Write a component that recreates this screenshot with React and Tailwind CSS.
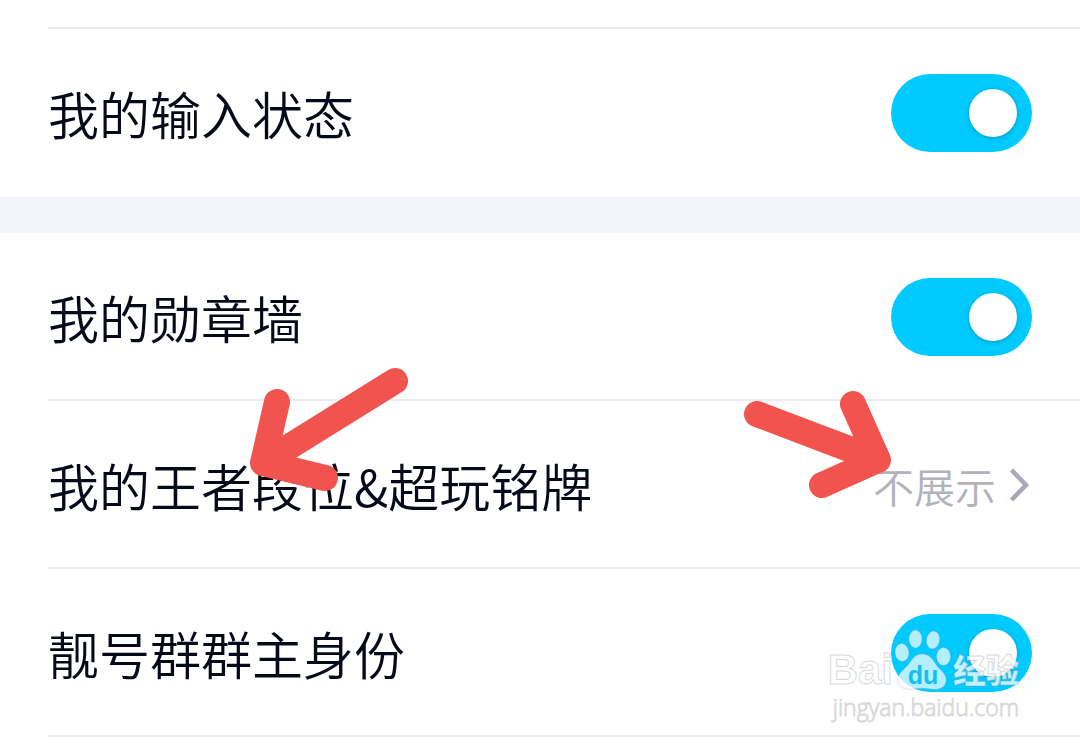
import React, { useState } from 'react';

const Toggle = ({ id, checked, onChange }) => (
  <input
    id={id}
    type="checkbox"
    role="switch"
    checked={checked}
    onChange={onChange}
    className="relative h-[78px] w-[141px] shrink-0 cursor-pointer appearance-none rounded-full bg-gray-300 transition-colors before:absolute before:left-[15px] before:top-[15px] before:size-12 before:rounded-full before:bg-white before:shadow-[0_1px_4px_rgba(0,60,90,0.35)] before:transition-transform checked:bg-[#00caff] checked:before:translate-x-[63px]"
  />
);

const ToggleRow = ({ id, label, divider, children }) => {
  const [checked, setChecked] = useState(true);

  return (
    <li className="relative bg-white pl-12">
      <div
        className={`flex items-center justify-between border-b-2 pt-[45px] pr-12 pb-[43px] ${
          divider ? 'border-[#ebebed]' : 'border-transparent'
        }`}
      >
        <label htmlFor={id} className="cursor-pointer text-[51px] leading-[78px]">
          {label}
        </label>
        <Toggle id={id} checked={checked} onChange={(e) => setChecked(e.target.checked)} />
      </div>
      {children}
    </li>
  );
};

const LinkRow = ({ label, value, children }) => (
  <li className="relative bg-white pl-12">
    <button
      type="button"
      className="flex w-full cursor-pointer items-center justify-between border-b-2 border-[#ebebed] pt-[45px] pr-12 pb-[43px] text-left"
    >
      <span className="text-[51px] leading-[78px]">{label}</span>
      <span className="flex items-center gap-3 text-[41px] leading-[78px] text-[#b2b2b9]">
        {value}
        <svg width="24" height="36" viewBox="0 0 24 36" fill="none" stroke="#a9a9b8" strokeWidth="4.5">
          <path d="M3.5 3 18 18 3.5 33" />
        </svg>
      </span>
    </button>
    {children}
  </li>
);

const ArrowLeft = () => (
  <svg
    className="pointer-events-none absolute -top-9 left-[248px] z-10"
    width="164"
    height="128"
    viewBox="0 0 164 128"
    fill="none"
    stroke="#f1544e"
    strokeWidth="26"
    strokeLinecap="round"
    strokeLinejoin="round"
  >
    <path d="M147 16 15 98M29 37 15 98 77 113" />
  </svg>
);

const ArrowRight = () => (
  <svg
    className="pointer-events-none absolute -top-3 right-[184px] z-10"
    width="156"
    height="112"
    viewBox="0 0 156 112"
    fill="none"
    stroke="#f1544e"
    strokeWidth="26"
    strokeLinecap="round"
    strokeLinejoin="round"
  >
    <path d="M17 25 138 71M113 15 138 71 82 96" />
  </svg>
);

const Paw = () => (
  <svg width="60" height="64" viewBox="0 0 60 64" fill="#fff" fillOpacity="0.7" stroke="#999" strokeOpacity="0.4" strokeWidth="0.8">
    <ellipse cx="9" cy="25.5" rx="7" ry="9" transform="rotate(-6 9 25.5)" />
    <ellipse cx="22.5" cy="12" rx="6.5" ry="9" />
    <ellipse cx="40" cy="13" rx="6.5" ry="9" transform="rotate(10 40 13)" />
    <ellipse cx="50.5" cy="29.5" rx="7" ry="9" />
    <path d="M29 27c-8 0-10 6-14 11C11 43 4 46 5 54c1 8 9 9 15 8 6-1 12-1 18 0 6 1 14 0 15-8 1-7-5-10-9-15-4-6-7-12-15-12Z" />
    <text x="30" y="57" textAnchor="middle" fill="#12bfee" fillOpacity="1" stroke="none" className="font-['Liberation_Sans',sans-serif] text-[25px] font-bold">
      du
    </text>
  </svg>
);

const Watermark = () => (
  <div className="pointer-events-none absolute right-[61px] top-[58px] z-10 flex flex-col font-['Liberation_Sans','Noto_Sans_CJK_SC',sans-serif] text-white/75 [-webkit-text-stroke:1px_rgba(140,140,140,0.35)]">
    <div className="flex items-end">
      <span className="text-[42px] leading-[42px] font-bold">Bai</span>
      <Paw />
      <span className="text-[33px] leading-[38px] font-black">经验</span>
    </div>
    <span className="self-end font-['Open_Sans',sans-serif] text-[23px] leading-8">jingyan.baidu.com</span>
  </div>
);

const App = () => {
  return (
    <main className="min-h-screen bg-white font-['Noto_Sans_CJK_SC',sans-serif] font-[350] text-[#060a18]">
      <div className="ml-12 h-[29px] border-b-2 border-[#ebebed]" />
      <ul>
        <ToggleRow id="typing-status" label="我的输入状态" />
      </ul>
      <div className="h-9 bg-[#f3f5fa]" />
      <ul>
        <ToggleRow id="medal-wall" label="我的勋章墙" divider />
        <LinkRow label="我的王者段位&超玩铭牌" value="不展示">
          <ArrowLeft />
          <ArrowRight />
        </LinkRow>
        <ToggleRow id="group-owner" label="靓号群群主身份" divider>
          <Watermark />
        </ToggleRow>
      </ul>
    </main>
  );
};

export default App;
